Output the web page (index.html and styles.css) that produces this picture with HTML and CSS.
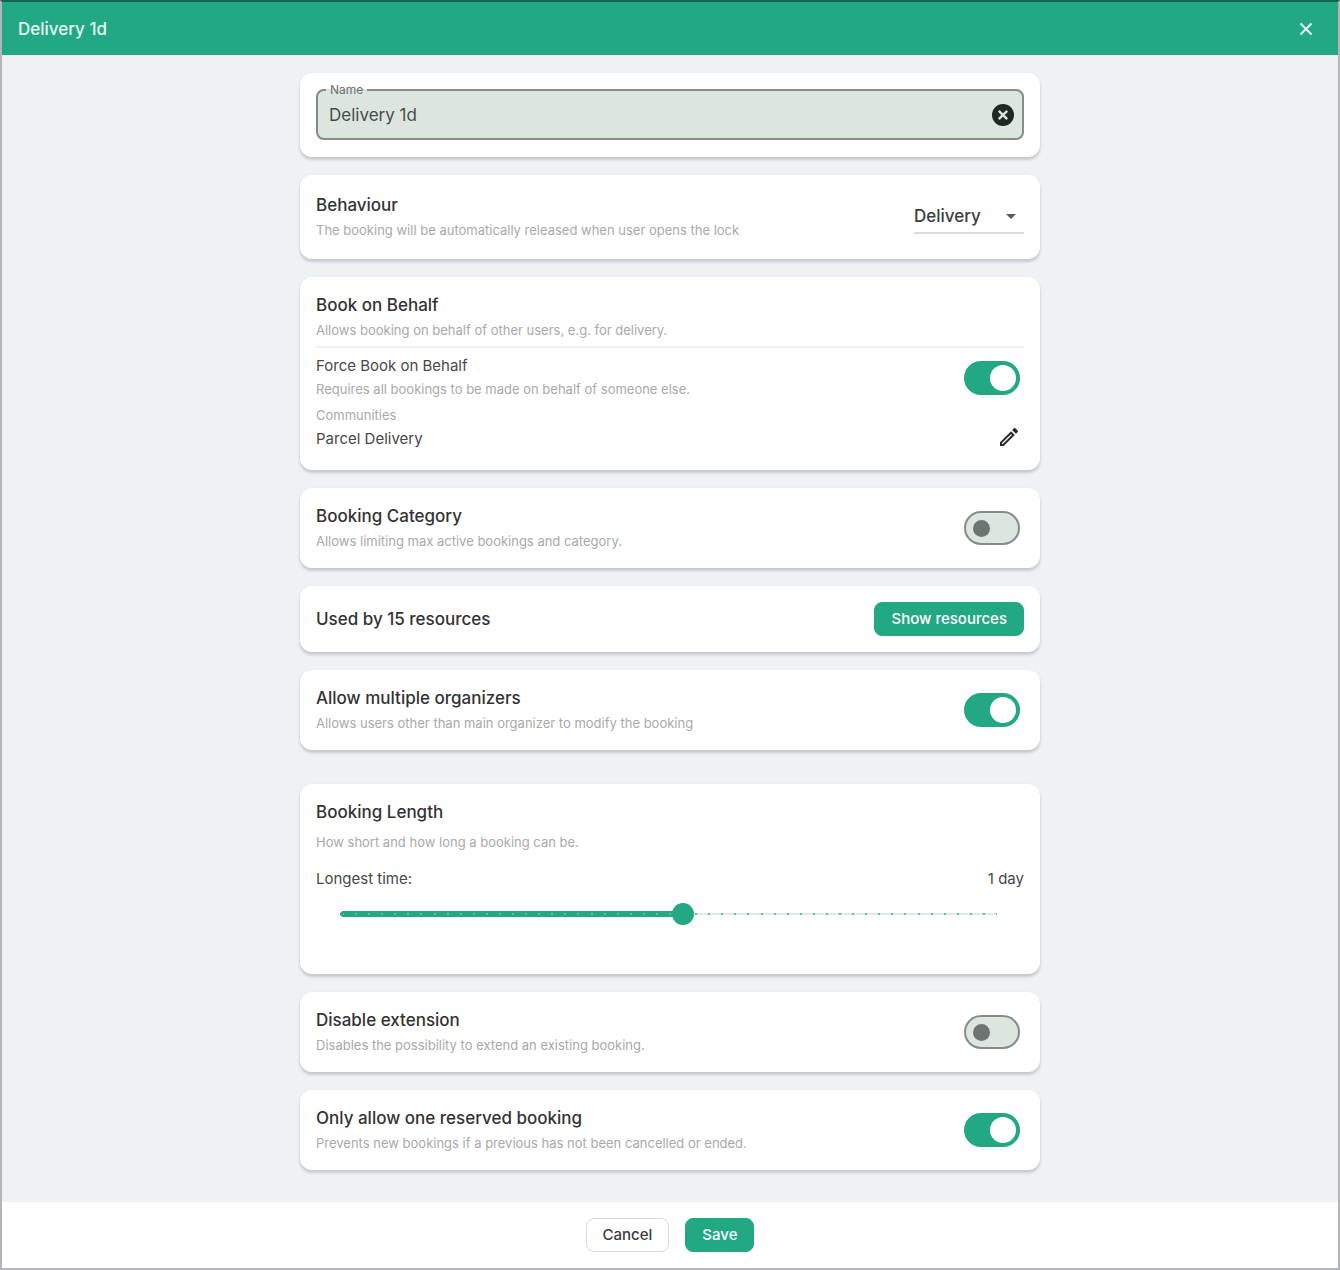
FILE: index.html
```html
<!DOCTYPE html>
<html lang="en">
<head>
<meta charset="utf-8">
<meta name="viewport" content="width=device-width, initial-scale=1">
<title>Delivery 1d</title>
<link rel="stylesheet" href="styles.css">
</head>
<body>
<form class="dialog">
  <header class="dialog-header">
    <h1 class="dialog-title">Delivery 1d</h1>
    <button class="icon-button close" type="button" aria-label="Close">
      <svg width="14" height="14" viewBox="0 0 14 14"><path d="M1.5 1.5l11 11M12.5 1.5l-11 11" fill="none" stroke="currentColor" stroke-width="2"/></svg>
    </button>
  </header>

  <main class="content">
    <section class="card card-name">
      <fieldset class="field">
        <legend class="field-legend"><label for="name">Name</label></legend>
        <input class="field-input" id="name" type="text" value="Delivery 1d">
        <button class="icon-button" type="button" aria-label="Clear name">
          <svg width="22" height="22" viewBox="0 0 22 22"><circle cx="11" cy="11" r="11" fill="#202823"/><path d="M6.800 6.800l8.400 8.400M15.200 6.800l-8.400 8.400" stroke="#dce6df" stroke-width="2.400"/></svg>
        </button>
      </fieldset>
    </section>

    <section class="card card-tall row">
      <div>
        <label class="title" for="behaviour">Behaviour</label>
        <p class="hint">The booking will be automatically released when user opens the lock</p>
      </div>
      <div class="dropdown">
        <select class="dropdown-select" id="behaviour"><option>Delivery</option></select>
        <svg class="dropdown-arrow" width="10" height="5" viewBox="0 0 10 5"><path d="M0 0h10L5 5z" fill="#5a5a5a"/></svg>
      </div>
    </section>

    <section class="card card-behalf">
      <h2 class="title">Book on Behalf</h2>
      <p class="hint">Allows booking on behalf of other users, e.g. for delivery.</p>
      <hr class="divider">
      <div class="row">
        <div>
          <label class="subtitle" for="force">Force Book on Behalf</label>
          <p class="hint">Requires all bookings to be made on behalf of someone else.</p>
        </div>
        <input class="switch" id="force" type="checkbox" role="switch" checked>
      </div>
      <div class="row communities">
        <div class="communities-text">
          <p class="hint">Communities</p>
          <p class="subtitle">Parcel Delivery</p>
        </div>
        <button class="icon-button edit" type="button" aria-label="Edit communities">
          <svg width="24" height="24" viewBox="0 0 24 24"><path d="M14.060 9.020l.920.920L5.920 19H5v-.920l9.060-9.060M17.660 3c-.250 0-.510.100-.700.290l-1.830 1.830 3.750 3.750 1.830-1.830c.390-.390.390-1.020 0-1.410l-2.340-2.340c-.200-.200-.450-.290-.710-.290zm-3.600 3.190L3 17.250V21h3.750L17.810 9.940l-3.750-3.750z" fill="#2a2a2a"/></svg>
        </button>
      </div>
    </section>

    <section class="card row">
      <div>
        <label class="title" for="category">Booking Category</label>
        <p class="hint">Allows limiting max active bookings and category.</p>
      </div>
      <input class="switch" id="category" type="checkbox" role="switch">
    </section>

    <section class="card card-compact row">
      <h2 class="title">Used by 15 resources</h2>
      <button class="button button-primary" type="button">Show resources</button>
    </section>

    <section class="card row">
      <div>
        <label class="title" for="organizers">Allow multiple organizers</label>
        <p class="hint">Allows users other than main organizer to modify the booking</p>
      </div>
      <input class="switch" id="organizers" type="checkbox" role="switch" checked>
    </section>

    <section class="card card-length">
      <h2 class="title">Booking Length</h2>
      <p class="hint">How short and how long a booking can be.</p>
      <div class="row length-row">
        <label class="subtitle" for="longest">Longest time:</label>
        <output class="subtitle" for="longest">1 day</output>
      </div>
      <div class="slider-row">
        <input class="slider" id="longest" type="range" min="0" max="50" value="26" style="--value: 0.52">
      </div>
    </section>

    <section class="card row">
      <div>
        <label class="title" for="extension">Disable extension</label>
        <p class="hint">Disables the possibility to extend an existing booking.</p>
      </div>
      <input class="switch" id="extension" type="checkbox" role="switch">
    </section>

    <section class="card row">
      <div>
        <label class="title" for="single">Only allow one reserved booking</label>
        <p class="hint">Prevents new bookings if a previous has not been cancelled or ended.</p>
      </div>
      <input class="switch" id="single" type="checkbox" role="switch" checked>
    </section>
  </main>

  <footer class="dialog-footer">
    <button class="button" type="button">Cancel</button>
    <button class="button button-primary" type="submit">Save</button>
  </footer>
</form>
</body>
</html>
```

FILE: styles.css
```css
:root {
  --green: #22a883;
  --surface: #dce6df;
  --outline: #868c88;
}

* {
  box-sizing: border-box;
}

body {
  margin: 0;
  background: #fff;
  color: #3c3c3c;
  font-family: Inter, sans-serif;
  font-size: 15px;
  line-height: 20px;
}

h1, h2, p {
  margin: 0;
}

button, input, select {
  font: inherit;
  color: inherit;
}

.dialog {
  display: flex;
  flex-direction: column;
  min-height: 100vh;
  border: 2px solid #b4b5b8;
  border-top-color: #17644f;
}

.dialog-header {
  display: flex;
  align-items: center;
  justify-content: space-between;
  height: 53px;
  padding: 0 25px 0 16px;
  background: var(--green);
  color: #e6f8f1;
}

.dialog-title {
  font-size: 17px;
  font-weight: 500;
}

.icon-button {
  display: flex;
  padding: 0;
  border: 0;
  background: none;
  cursor: pointer;
}

.content {
  display: flex;
  flex: 1;
  flex-direction: column;
  align-items: center;
  gap: 18px;
  padding: 18px 16px 32px;
  background: #eff1f5;
}

.card {
  width: 100%;
  max-width: 740px;
  min-height: 80px;
  padding: 16px;
  border-radius: 12px;
  background: #fff;
  box-shadow: 0 3px 3px rgba(0, 0, 0, 0.14), 0 1px 4px rgba(0, 0, 0, 0.06);
}

.card-name {
  min-height: 84px;
  padding: 10px 16px 16px;
}

.card-tall {
  min-height: 84px;
}

.card-behalf {
  min-height: 193px;
}

.card-compact {
  min-height: 66px;
}

.card-length {
  min-height: 190px;
  margin-top: 16px;
}

.row {
  display: flex;
  align-items: center;
  justify-content: space-between;
  gap: 16px;
}

.title {
  display: block;
  padding: 2px 0;
  color: #333;
  font-size: 17px;
  font-weight: 500;
}

.subtitle {
  display: block;
  color: #484848;
}

.hint {
  padding: 3px 0 1px;
  color: #a9a9a9;
  font-size: 13px;
}

.field {
  display: flex;
  align-items: center;
  min-width: 0;
  margin: 0;
  padding: 0 8px 5px;
  border: 2px solid var(--outline);
  border-radius: 8px;
  background: var(--surface);
}

.field-legend {
  padding: 0 4px;
  color: #6c706d;
  font-size: 12px;
  line-height: 14px;
}

.field-input {
  flex: 1;
  min-width: 0;
  height: 36px;
  padding: 0 3px;
  border: 0;
  outline: 0;
  background: none;
  color: #484d4a;
  font-size: 17px;
}

.dropdown {
  display: grid;
  align-items: center;
  width: 110px;
  border-bottom: 2px solid #dcdcdc;
}

.dropdown-select {
  grid-area: 1 / 1;
  height: 32px;
  padding: 0;
  border: 0;
  outline: 0;
  appearance: none;
  background: none;
  font-size: 17px;
  font-weight: 500;
}

.dropdown-arrow {
  grid-area: 1 / 1;
  justify-self: end;
  margin-right: 8px;
  pointer-events: none;
}

.divider {
  height: 2px;
  margin: 5px 0 8px;
  border: 0;
  background: #f1f1f1;
}

.communities {
  align-items: flex-end;
  margin-top: 2px;
}

.communities-text {
  display: grid;
  gap: 3px;
}

.edit {
  margin-right: 3px;
}

.switch {
  display: flex;
  flex: none;
  align-items: center;
  width: 56px;
  height: 34px;
  margin: 0 4px 0 0;
  padding: 0 7px;
  border: 2px solid var(--outline);
  border-radius: 17px;
  appearance: none;
  background: var(--surface);
  cursor: pointer;
}

.switch::before {
  width: 17px;
  height: 17px;
  border-radius: 50%;
  background: #6f7371;
  content: "";
}

.switch:checked {
  justify-content: flex-end;
  padding: 0 2px;
  border-color: var(--green);
  background: var(--green);
}

.switch:checked::before {
  width: 26px;
  height: 26px;
  background: #fff;
}

.button {
  height: 34px;
  padding: 0 16px;
  border: 1px solid #dadada;
  border-radius: 8px;
  background: #fff;
  font-weight: 500;
  cursor: pointer;
}

.button-primary {
  border-color: var(--green);
  background: var(--green);
  color: #fff;
}

.card-length .hint {
  margin-top: 5px;
}

.length-row {
  margin-top: 16px;
}

.slider-row {
  padding: 14px 16px;
}

.slider {
  display: block;
  width: 100%;
  height: 22px;
  margin: 0;
  appearance: none;
  background:
    repeating-linear-gradient(90deg, #5cc09f 0 1px, transparent 1px calc(2% - 1px), #5cc09f calc(2% - 1px) 2%) center / calc(100% - 22px) 2px no-repeat,
    radial-gradient(circle closest-side, var(--green) 90%, transparent) 8px center / 6px 6px no-repeat,
    linear-gradient(var(--green), var(--green)) 11px center / calc((100% - 22px) * var(--value)) 6px no-repeat,
    linear-gradient(#e2e9e5, #e2e9e5) center / calc(100% - 22px) 2px no-repeat;
}

.slider::-webkit-slider-thumb {
  width: 22px;
  height: 22px;
  border-radius: 50%;
  appearance: none;
  background: var(--green);
}

.dialog-footer {
  display: flex;
  align-items: center;
  justify-content: center;
  gap: 16px;
  height: 66px;
  background: #fff;
}
```
